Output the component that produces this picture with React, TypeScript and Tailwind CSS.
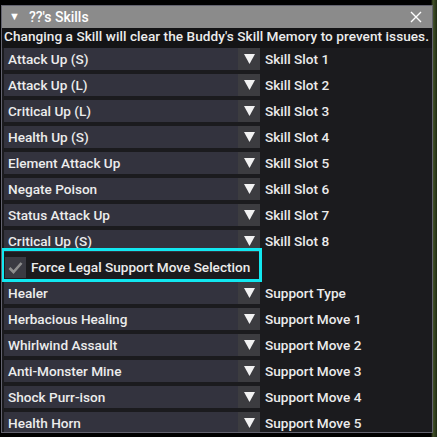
import React from 'react';

const SKILLS: [string, string][] = [
  ['Attack Up (S)', 'Skill Slot 1'],
  ['Attack Up (L)', 'Skill Slot 2'],
  ['Critical Up (L)', 'Skill Slot 3'],
  ['Health Up (S)', 'Skill Slot 4'],
  ['Element Attack Up', 'Skill Slot 5'],
  ['Negate Poison', 'Skill Slot 6'],
  ['Status Attack Up', 'Skill Slot 7'],
  ['Critical Up (S)', 'Skill Slot 8'],
];

const SUPPORT: [string, string][] = [
  ['Healer', 'Support Type'],
  ['Herbacious Healing', 'Support Move 1'],
  ['Whirlwind Assault', 'Support Move 2'],
  ['Anti-Monster Mine', 'Support Move 3'],
  ['Shock Purr-ison', 'Support Move 4'],
  ['Health Horn', 'Support Move 5'],
];

const Combo: React.FC<{ value: string; label: string }> = ({ value, label }) => (
  <div className="flex items-center h-[22px] shrink-0">
    <div className="flex w-[256px] h-full">
      <div className="flex-1 bg-[#33333e] pl-[4px] flex items-center">{value}</div>
      <div className="w-[22px] bg-[#3c3c40] flex items-center justify-center">
        <svg width="11" height="10" viewBox="0 0 11 10">
          <polygon points="0,0 11,0 5.5,10" fill="#f2f2f2" />
        </svg>
      </div>
    </div>
    <span className="ml-[5px]">{label}</span>
  </div>
);

export default function App() {
  return (
    <div
      className="w-[437px] h-[437px] overflow-hidden bg-[linear-gradient(90deg,#000_0,#000_431px,#44532a_433px,#1f2a12_437px)] text-[13.6px] font-medium text-[#ececec]"
      style={{ fontFamily: 'Roboto, "Noto Sans", sans-serif' }}
    >
      <div className="relative ml-[1px] mt-[5px] w-[432px] h-[428px] border border-[#62626e] bg-[#1b1b1e] flex flex-col overflow-hidden">
        <div className="h-[22px] shrink-0 bg-[#8b8b8b] flex items-center pl-[7px] pr-[10px] text-white text-[14px]">
          <span className="text-[11px] mr-[9px]">▼</span>
          <span>??'s Skills</span>
          <svg className="ml-auto" width="12" height="12" viewBox="0 0 12 12">
            <path d="M1 1 L11 11 M11 1 L1 11" stroke="#fff" strokeWidth="1.4" />
          </svg>
        </div>
        <div className="px-[2px] h-[20px] shrink-0 whitespace-nowrap bg-[#141416] leading-[17px] tracking-[0.05px]">
          Changing a Skill will clear the Buddy's Skill Memory to prevent issues.
        </div>
        <div className="flex flex-col gap-[4px] pl-[2px]">
          {SKILLS.map(([v, l]) => (
            <Combo key={l} value={v} label={l} />
          ))}
          <div className="flex items-center h-[22px] shrink-0">
            <div className="w-[21px] h-[21px] ml-[1px] bg-[#3a3a42] flex items-center justify-center">
              <svg width="15" height="13" viewBox="0 0 15 13">
                <path d="M1.5 7 L5.5 11 L13.5 2" stroke="#8e8e8e" strokeWidth="2.6" fill="none" />
              </svg>
            </div>
            <span className="ml-[5px]">Force Legal Support Move Selection</span>
          </div>
          {SUPPORT.map(([v, l]) => (
            <Combo key={l} value={v} label={l} />
          ))}
        </div>
        <div className="absolute left-[-1px] top-[242px] w-[261px] h-[34px] border-[3px] border-[#12e8f0]" />
      </div>
    </div>
  );
}
